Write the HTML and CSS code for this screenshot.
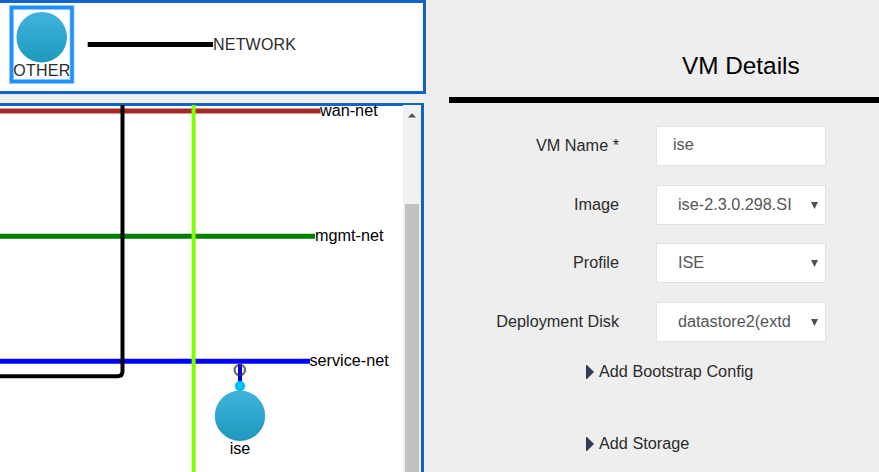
FILE: index.html
```html
<!DOCTYPE html>
<html lang="en">
<head>
<meta charset="utf-8">
<title>VM Details</title>
<link rel="stylesheet" href="styles.css">
</head>
<body>
<main class="layout">
  <section class="designer">
    <div class="palette">
      <svg class="drawing" width="423" height="88" viewBox="0 3 423 88">
        <defs>
          <linearGradient id="node-fill" x1="0" y1="0" x2="0" y2="1">
            <stop offset="0" stop-color="#41b3de"/>
            <stop offset="1" stop-color="#1c9abd"/>
          </linearGradient>
        </defs>
        <rect class="selection-halo" x="11.5" y="7.5" width="60.5" height="74"/>
        <rect class="selection" x="11.5" y="7.5" width="60.5" height="74"/>
        <circle cx="41.7" cy="37.2" r="25.3" fill="url(#node-fill)"/>
        <text class="palette-label" x="41.7" y="75.8" text-anchor="middle" textLength="57">OTHER</text>
        <path class="wire wire-black" d="M87.7 44.5H213"/>
        <text class="palette-label" x="213" y="49.6" textLength="83">NETWORK</text>
      </svg>
    </div>
    <div class="canvas">
      <svg class="drawing" width="403" height="366" viewBox="0 106 403 366">
        <path class="wire wire-brown" d="M0 111H320.5"/>
        <path class="wire wire-green" d="M0 236.2H315"/>
        <path class="wire wire-blue" d="M0 361.2H310"/>
        <path class="link link-black" d="M0 376.2H117.5Q122.5 376.2 122.5 371.2V105"/>
        <path class="link link-lime" d="M193.6 105V472"/>
        <path class="link link-blue" d="M240 364V386"/>
        <circle class="port-ring" cx="239.8" cy="370" r="5.2"/>
        <circle class="port" cx="240" cy="386" r="5.2"/>
        <circle cx="240" cy="415.8" r="25.2" fill="url(#node-fill)"/>
        <text class="net-label" x="320" y="116">wan-net</text>
        <text class="net-label" x="315" y="241">mgmt-net</text>
        <text class="net-label" x="309.5" y="366">service-net</text>
        <text class="net-label" x="240" y="454" text-anchor="middle">ise</text>
      </svg>
      <div class="scrollbar">
        <svg class="scroll-up" width="8" height="5" viewBox="0 0 8 5"><path d="M0 4.5L4 0.2L8 4.5Z"/></svg>
        <div class="thumb"></div>
      </div>
    </div>
  </section>
  <section class="details">
    <h1 class="title">VM Details</h1>
    <form class="form">
      <div class="row"><span class="label">VM Name *</span><div class="field"><span class="value">ise</span></div></div>
      <div class="row"><span class="label">Image</span><div class="field select"><span class="value">ise-2.3.0.298.SI</span><svg class="arrow" width="7" height="7" viewBox="0 0 7 7"><path d="M0 0H7L3.5 7Z"/></svg></div></div>
      <div class="row"><span class="label">Profile</span><div class="field select"><span class="value">ISE</span><svg class="arrow" width="7" height="7" viewBox="0 0 7 7"><path d="M0 0H7L3.5 7Z"/></svg></div></div>
      <div class="row"><span class="label">Deployment Disk</span><div class="field select"><span class="value">datastore2(extd</span><svg class="arrow" width="7" height="7" viewBox="0 0 7 7"><path d="M0 0H7L3.5 7Z"/></svg></div></div>
    </form>
    <div class="expander"><svg class="caret" width="8" height="14" viewBox="0 0 8 14"><path d="M0 0H1L8 7L1 14H0Z"/></svg>Add Bootstrap Config</div>
    <div class="expander"><svg class="caret" width="8" height="14" viewBox="0 0 8 14"><path d="M0 0H1L8 7L1 14H0Z"/></svg>Add Storage</div>
  </section>
</main>
</body>
</html>
```
FILE: styles.css
```css
* { box-sizing: border-box; }
body {
  margin: 0;
  background: #eeeeee;
  font: 16.24px/20px "Liberation Sans", Arial, sans-serif;
  color: #2b2b2b;
}
.layout { display: flex; height: 472px; overflow: hidden; }
.designer { width: 426px; flex: none; }
.palette {
  height: 94px;
  border: 3px solid #1163c8;
  border-left: 0;
  background: #fff;
}
.canvas {
  display: flex;
  width: 424px;
  height: 400px;
  margin-top: 9px;
  border: 3px solid #1163c8;
  border-left: 0;
  background: #fff;
}
.drawing { display: block; flex: none; overflow: visible; }
.selection, .selection-halo { fill: none; stroke: #1e90ff; stroke-width: 3.4; }
.selection-halo { stroke-width: 5; opacity: .4; }
.palette-label { font-size: 16px; fill: #2b2b2b; }
.net-label { font-size: 16.22px; fill: #000; }
.wire { fill: none; stroke-width: 5; }
.wire-black { stroke: #000; }
.wire-brown { stroke: #a52a2a; }
.wire-green { stroke: #008000; }
.wire-blue { stroke: #0000ff; }
.link { fill: none; stroke-width: 4; }
.link-black { stroke: #000; }
.link-lime { stroke: #7fff00; }
.link-blue { stroke: #0000e6; }
.port-ring { fill: none; stroke: #333; stroke-opacity: .75; stroke-width: 2.2; }
.port { fill: #00bfff; }
.scrollbar {
  width: 18px;
  margin-top: -1px;
  background: #f1f1f1;
}
.scroll-up { display: block; margin: 7.5px auto 0 5px; fill: #505050; }
.thumb { height: 300px; margin: 86.5px 2px 0; background: #c1c1c1; }
.details { flex: 1; margin-left: 23px; }
.title {
  height: 103px;
  margin: 0;
  padding: 51px 0 0 233px;
  border-bottom: 6px solid #000;
  font-size: 24.33px;
  font-weight: 400;
  line-height: 30px;
  color: #000;
}
.form { display: grid; row-gap: 18.67px; padding-top: 23px; }
.row { display: flex; align-items: center; height: 40px; }
.label { width: 170px; margin-right: 37px; padding-bottom: 2px; text-align: right; }
.field {
  display: flex;
  align-items: center;
  justify-content: space-between;
  width: 170px;
  height: 40px;
  padding: 0 7px 2px 16px;
  border: 1px solid #e2e2e2;
  background: #fff;
  color: #555;
}
.value { padding-bottom: 2px; }
.select { padding: 0 7px 0 21px; }
.select .value { width: 113px; white-space: nowrap; }
.arrow { fill: #505050; margin-top: 1px; }
.expander {
  display: flex;
  align-items: center;
  gap: 5px;
  height: 20px;
  margin: 19px 0 52px 137px;
}
.expander + .expander { margin-top: 52px; }
.caret { margin-top: 2px; fill: #343b4e; }
```
